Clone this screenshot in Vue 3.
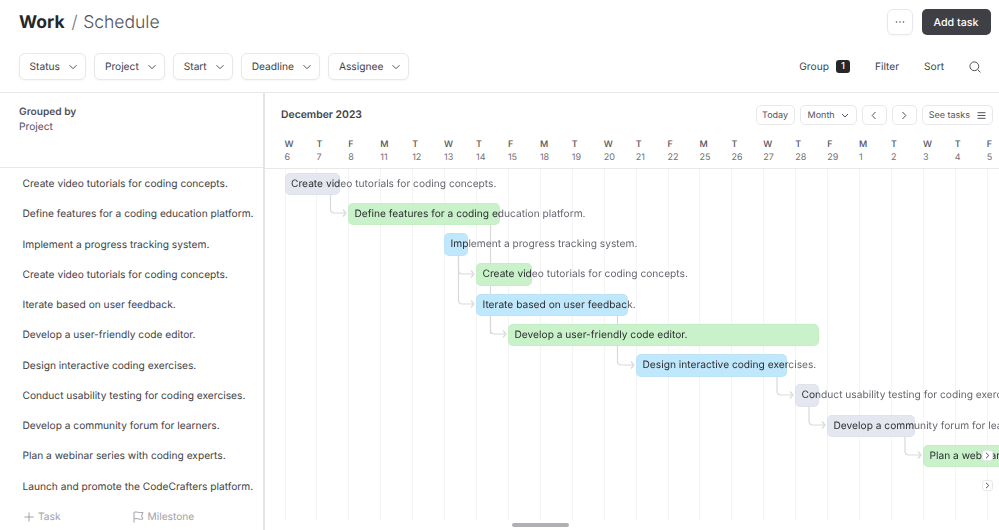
<template>
  <div class="page">
    <header class="topbar">
      <h1 class="crumb"><strong>Work</strong><span class="slash">/</span><span class="current">Schedule</span></h1>
      <div class="top-actions">
        <button class="more-btn">
          <svg width="10" height="4" viewBox="0 0 10 4"><circle cx="1.5" cy="2" r="0.8" /><circle cx="5" cy="2" r="0.8" /><circle cx="8.5" cy="2" r="0.8" /></svg>
        </button>
        <button class="add-btn">Add task</button>
      </div>
    </header>

    <div class="filters">
      <div class="filter-list">
        <button v-for="f in filters" :key="f" class="filter-btn">
          {{ f }}
          <svg class="chev" width="10" height="6" viewBox="0 0 10 6"><path d="M1.5 1.2 5 4.7l3.5-3.5" /></svg>
        </button>
      </div>
      <div class="view-tools">
        <span class="tool group-tool">Group <b class="badge">1</b></span>
        <span class="tool">Filter</span>
        <span class="tool">Sort</span>
        <svg class="search" width="12" height="12" viewBox="0 0 12 12"><circle cx="5.3" cy="5.3" r="4.4" /><path d="m8.6 8.6 2.8 2.8" /></svg>
      </div>
    </div>

    <div class="main">
      <aside class="side">
        <div class="side-head">
          <div class="grouped">Grouped by</div>
          <div class="grouped-value">Project</div>
        </div>
        <div class="task-rows">
          <div v-for="(t, i) in tasks" :key="i" class="task-row">{{ t.name }}</div>
        </div>
        <div class="side-foot">
          <span class="add-item">
            <svg width="10" height="10" viewBox="0 0 10 10"><path d="M5 .5v9M.5 5h9" /></svg>
            Task
          </span>
          <span class="add-item milestone">
            <svg width="11" height="12" viewBox="0 0 11 12"><path d="M1 11.5V1.2c3-1 5.500 1.300 9 .2l-1.500 3.600 1.500 3c-3.500 1-6-1.200-9-.2" /></svg>
            Milestone
          </span>
        </div>
      </aside>

      <section class="chart">
        <div class="chart-bar">
          <div class="month">December 2023</div>
          <div class="chart-tools">
            <button class="mini-btn today-btn">Today</button>
            <button class="mini-btn month-btn">
              Month
              <svg width="8" height="5" viewBox="0 0 8 5"><path d="M1 1l3 3 3-3" /></svg>
            </button>
            <button class="mini-btn arrow-btn">
              <svg width="6" height="9" viewBox="0 0 6 9"><path d="M4.500 1 1.200 4.500 4.500 8" /></svg>
            </button>
            <button class="mini-btn arrow-btn">
              <svg width="6" height="9" viewBox="0 0 6 9"><path d="M1.500 1l3.300 3.500L1.500 8" /></svg>
            </button>
            <button class="mini-btn tasks-btn">
              See tasks
              <svg width="9" height="7" viewBox="0 0 9 7"><path d="M.5 .7h8M.5 3.500h8M.5 6.300h8" /></svg>
            </button>
          </div>
        </div>

        <div class="days">
          <div v-for="d in days" :key="d.n + d.w" class="day">
            <div class="day-name">{{ d.w }}</div>
            <div class="day-num">{{ d.n }}</div>
          </div>
        </div>

        <div class="canvas">
          <div class="grid-lines">
            <span v-for="d in days" :key="d.n + d.w" class="grid-line"></span>
          </div>

          <svg class="links" width="734" height="351" viewBox="265 169 734 351">
            <g v-for="(l, i) in links" :key="i">
              <path :d="linkPath(l)" />
              <path :d="arrowPath(l)" />
            </g>
            <path d="M490.500 225V334" />
          </svg>

          <div
            v-for="(t, i) in tasks.slice(0, 10)"
            :key="i"
            class="bar"
            :class="t.kind"
            :style="barStyle(t, i)"
          >
            <span class="bar-label" :style="{ '--inside': t.end - t.start - 6.5 + 'px' }">{{ t.name }}</span>
          </div>

          <button class="jump" :style="{ top: '281px' }">
            <svg width="5" height="7" viewBox="0 0 5 7"><path d="M1 .8 3.800 3.500 1 6.200" /></svg>
          </button>
          <button class="jump" :style="{ top: '311px' }">
            <svg width="5" height="7" viewBox="0 0 5 7"><path d="M1 .8 3.800 3.500 1 6.200" /></svg>
          </button>
        </div>
        <div class="scroll-track"><span class="scroll-thumb"></span></div>
      </section>
    </div>
  </div>
</template>

<script setup>
const filters = ['Status', 'Project', 'Start', 'Deadline', 'Assignee']

const tasks = [
  { name: 'Create video tutorials for coding concepts.', kind: 'gray', start: 284.5, end: 340 },
  { name: 'Define features for a coding education platform.', kind: 'green', start: 348, end: 500 },
  { name: 'Implement a progress tracking system.', kind: 'blue', start: 444, end: 468 },
  { name: 'Create video tutorials for coding concepts.', kind: 'green', start: 476, end: 532 },
  { name: 'Iterate based on user feedback.', kind: 'blue', start: 476, end: 628 },
  { name: 'Develop a user-friendly code editor.', kind: 'green', start: 508, end: 819 },
  { name: 'Design interactive coding exercises.', kind: 'blue', start: 636, end: 787 },
  { name: 'Conduct usability testing for coding exercises.', kind: 'gray', start: 795, end: 819 },
  { name: 'Develop a community forum for learners.', kind: 'gray', start: 827, end: 915 },
  { name: 'Plan a webinar series with coding experts.', kind: 'green', start: 923, end: 1040 },
  { name: 'Launch and promote the CodeCrafters platform.' }
]

const days = [
  ['W', 6], ['T', 7], ['F', 8], ['M', 11], ['T', 12], ['W', 13], ['T', 14], ['F', 15],
  ['M', 18], ['T', 19], ['W', 20], ['T', 21], ['F', 22], ['M', 25], ['T', 26], ['W', 27],
  ['T', 28], ['F', 29], ['M', 1], ['T', 2], ['W', 3], ['T', 4], ['F', 5]
].map(([w, n]) => ({ w, n }))

// 连线坐标 (页面坐标)
const links = [
  { x: 330.5, y1: 194, y2: 213, to: 346 },
  { x: 458.5, y1: 255, y2: 274, to: 474 },
  { x: 458.5, y1: 255, y2: 304, to: 474 },
  { x: 490.5, y1: 315, y2: 334, to: 506 },
  { x: 617.5, y1: 315, y2: 365, to: 634 },
  { x: 777, y1: 376, y2: 395, to: 793 },
  { x: 809, y1: 406, y2: 425, to: 825 },
  { x: 905, y1: 436, y2: 455, to: 921 }
]

function linkPath(l) {
  return `M${l.x} ${l.y1}V${l.y2 - 4}q0 4 4 4H${l.to}`
}

function arrowPath(l) {
  return `M${l.to - 3} ${l.y2 - 3.500}l3 3.500-3 3.500`
}

function barStyle(t, i) {
  return {
    left: t.start - 265 + 'px',
    top: 3.5 + i * 30.25 + 'px',
    width: t.end - t.start + 'px'
  }
}
</script>

<style>
html,
body {
  margin: 0;
  background: #fff;
}
</style>

<style scoped>
.page {
  width: 999px;
  height: 530px;
  overflow: hidden;
  display: flex;
  flex-direction: column;
  font-family: Inter, "Liberation Sans", sans-serif;
  font-size: 10.2px;
  text-rendering: geometricPrecision;
  color: #3f3f46;
  background: #fff;
}

button {
  font-family: inherit;
  text-rendering: inherit;
  background: #fff;
  padding: 0;
  cursor: pointer;
}

svg {
  fill: none;
  stroke: #52525b;
  stroke-width: 1;
}

.topbar {
  display: flex;
  align-items: center;
  justify-content: space-between;
  height: 26px;
  padding: 9px 8.5px 0 19px;
}

.crumb {
  margin: 0;
  font-size: 17.5px;
  font-weight: 400;
  display: flex;
  align-items: baseline;
}

.crumb strong {
  font-weight: 700;
  color: #27272a;
}

.slash {
  margin: 0 5.5px 0 7px;
  color: #71717a;
  font-weight: 300;
}

.current {
  color: #52525b;
  font-weight: 300;
}

.top-actions {
  display: flex;
  gap: 9px;
}

.more-btn {
  width: 26px;
  height: 26px;
  border: 1px solid #e8e8ea;
  border-radius: 6px;
  box-shadow: 0 1px 2px rgba(0, 0, 0, 0.04);
  display: flex;
  align-items: center;
  justify-content: center;
}

.more-btn svg {
  fill: #52525b;
  stroke: none;
}

.add-btn {
  width: 69px;
  height: 26px;
  border: none;
  border-radius: 5px;
  background: #3f3f46;
  color: #fff;
  font-size: 10.7px;
  font-weight: 500;
}

.filters {
  display: flex;
  align-items: center;
  justify-content: space-between;
  margin-top: 18px;
  padding: 0 18px 12px 18.5px;
  border-bottom: 1px solid #e8e8ea;
}

.filter-list {
  display: flex;
  gap: 8px;
}

.filter-btn {
  height: 27px;
  display: flex;
  align-items: center;
  gap: 8px;
  padding: 0 7px 0 10px;
  border: 1px solid #e8e8ea;
  border-radius: 6px;
  box-shadow: 0 1px 2px rgba(0, 0, 0, 0.04);
  color: #3f3f46;
  font-size: 10.2px;
}

.view-tools {
  display: flex;
  align-items: center;
  gap: 25px;
}

.tool {
  display: flex;
  align-items: center;
  gap: 7px;
}

.badge {
  width: 14px;
  height: 13px;
  border-radius: 3px;
  background: #27272a;
  color: #fff;
  font-size: 9.5px;
  font-weight: 500;
  text-align: center;
  line-height: 13px;
}

.main {
  flex: 1;
  display: flex;
  min-height: 0;
}

.side {
  width: 263px;
  border-right: 2px solid #e4e4e7;
  display: flex;
  flex-direction: column;
}

.side-head {
  height: 75px;
  box-sizing: border-box;
  padding: 12px 19px 0;
  border-bottom: 1px solid #e8e8ea;
  line-height: 14.5px;
}

.grouped {
  font-weight: 600;
  color: #52525b;
}

.grouped-value {
  color: #52525b;
}

.task-rows {
  display: flex;
  flex-direction: column;
  padding-top: 1px;
}

.task-row {
  height: 30.25px;
  line-height: 30.25px;
  padding-left: 22.5px;
  white-space: nowrap;
  color: #3f3f46;
}

.side-foot {
  display: flex;
  align-items: center;
  padding: 8.5px 0 0 24px;
  color: #a1a1aa;
}

.add-item {
  display: flex;
  align-items: center;
  gap: 4px;
  line-height: 14px;
}

.add-item svg {
  stroke: #a1a1aa;
}

.milestone {
  margin-left: 72px;
}

.chart {
  flex: 1;
  min-width: 0;
  position: relative;
  overflow: hidden;
}

.chart-bar {
  height: 32px;
  display: flex;
  align-items: flex-end;
  justify-content: space-between;
  padding-left: 16px;
  padding-right: 6px;
}

.month {
  font-weight: 600;
  font-size: 10.4px;
  color: #3f3f46;
  line-height: 20px;
}

.chart-tools {
  display: flex;
  gap: 5px;
}

.mini-btn {
  box-sizing: content-box;
  height: 18px;
  display: flex;
  align-items: center;
  justify-content: center;
  gap: 8px;
  border: 1px solid #e8e8ea;
  border-radius: 5px;
  color: #52525b;
  font-size: 9px;
  padding: 0 6px;
}

.today-btn {
  padding: 0 5.5px;
}

.month-btn {
  padding: 0 7px;
  gap: 6px;
}

.tasks-btn {
  gap: 7px;
}

.arrow-btn {
  width: 23px;
  padding: 0;
}

.days {
  display: flex;
  padding-left: 19.5px;
  margin-top: 14px;
  height: 29px;
  border-bottom: 1px solid #e8e8ea;
}

.day {
  flex: 0 0 31.93px;
  font-size: 9px;
  line-height: 12.5px;
}

.day-name {
  font-weight: 500;
  color: #52525b;
}

.day-num {
  color: #71717a;
}

.canvas {
  position: relative;
  height: 351px;
}

.grid-lines {
  display: flex;
  height: 100%;
  padding-left: 19.5px;
}

.grid-line {
  flex: 0 0 31.93px;
  box-sizing: border-box;
  border-left: 1px solid #f4f4f5;
}

.links {
  position: absolute;
  left: 0;
  top: 0;
}

.links path {
  stroke: #d9d9dc;
  stroke-width: 1.2;
}

.bar {
  position: absolute;
  height: 22.5px;
  box-sizing: border-box;
  border-radius: 5px;
  padding-left: 6.5px;
  line-height: 22.5px;
  white-space: nowrap;
  box-shadow: inset 0 0 0 1px rgba(0, 0, 0, 0.02);
}

.bar.gray {
  background: #e4e7ef;
}

.bar.green {
  background: #c9f2ca;
}

.bar.blue {
  background: #c0e8fd;
}

.bar-label {
  display: inline-block;
  color: transparent;
  background: linear-gradient(to right, #27272a var(--inside), #5f5f68 var(--inside));
  -webkit-background-clip: text;
  background-clip: text;
}

.jump {
  position: absolute;
  left: 717px;
  width: 11px;
  height: 11px;
  border: 1px solid #e8e8ea;
  border-radius: 3px;
  display: flex;
  align-items: center;
  justify-content: center;
}

.scroll-track {
  height: 10px;
  position: relative;
}

.scroll-thumb {
  position: absolute;
  left: 247px;
  top: 2.500px;
  width: 57px;
  height: 4.500px;
  border-radius: 3px;
  background: #b0b0b4;
}
</style>
